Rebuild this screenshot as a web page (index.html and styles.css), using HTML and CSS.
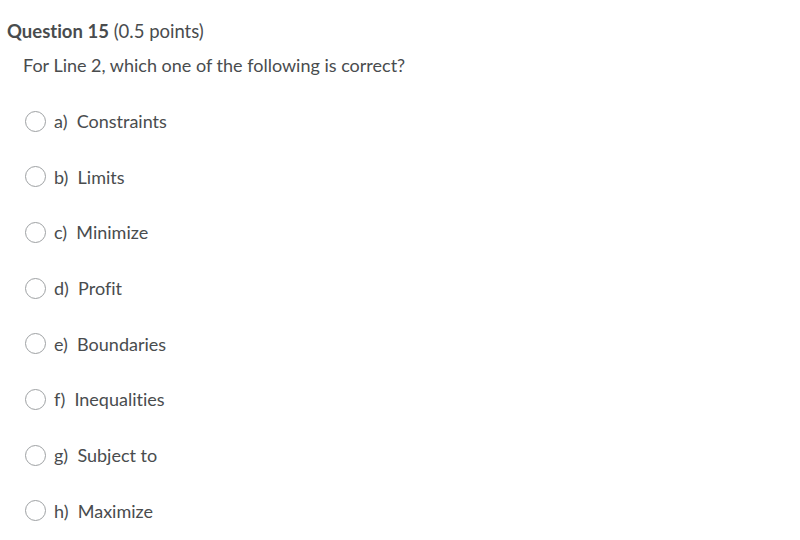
FILE: index.html
```html
<!DOCTYPE html>
<html>
<head>
<meta charset="utf-8">
<link rel="stylesheet" href="styles.css">
</head>
<body>
<div class="question">
  <h1 class="title"><strong>Question 15</strong> <span class="points">(0.5 points)</span></h1>
  <p class="prompt">For Line 2, which one of the following is correct?</p>
  <ul class="options">
    <li class="option"><span class="radio"></span><span class="label">a)&nbsp; Constraints</span></li>
    <li class="option"><span class="radio"></span><span class="label">b)&nbsp; Limits</span></li>
    <li class="option"><span class="radio"></span><span class="label">c)&nbsp; Minimize</span></li>
    <li class="option"><span class="radio"></span><span class="label">d)&nbsp; Profit</span></li>
    <li class="option"><span class="radio"></span><span class="label">e)&nbsp; Boundaries</span></li>
    <li class="option"><span class="radio"></span><span class="label">f)&nbsp; Inequalities</span></li>
    <li class="option"><span class="radio"></span><span class="label">g)&nbsp; Subject to</span></li>
    <li class="option"><span class="radio"></span><span class="label">h)&nbsp; Maximize</span></li>
  </ul>
</div>
</body>
</html>
```
FILE: styles.css
```css
html, body {
  margin: 0;
  padding: 0;
  background: #ffffff;
}
body {
  font-family: Lato, "Noto Sans", sans-serif;
  color: #494c4e;
  font-variant-ligatures: none;
}
.question {
  padding: 19px 0 0 7px;
}
.title {
  margin: 0;
  font-size: 18.5px;
  line-height: 24px;
  font-weight: 400;
}
.title strong {
  font-weight: 700;
}
.prompt {
  margin: 10px 0 0 16px;
  font-size: 18px;
  line-height: 24px;
}
.options {
  list-style: none;
  margin: 32px 0 0 18px;
  padding: 0;
  display: flex;
  flex-direction: column;
  gap: 31.7px;
}
.option {
  display: flex;
  align-items: center;
  gap: 8px;
  height: 24px;
  font-size: 18px;
}
.radio {
  width: 19px;
  height: 19px;
  border: 1px solid #9ea1a3;
  border-radius: 50%;
  box-sizing: content-box;
  flex: none;
}
```
